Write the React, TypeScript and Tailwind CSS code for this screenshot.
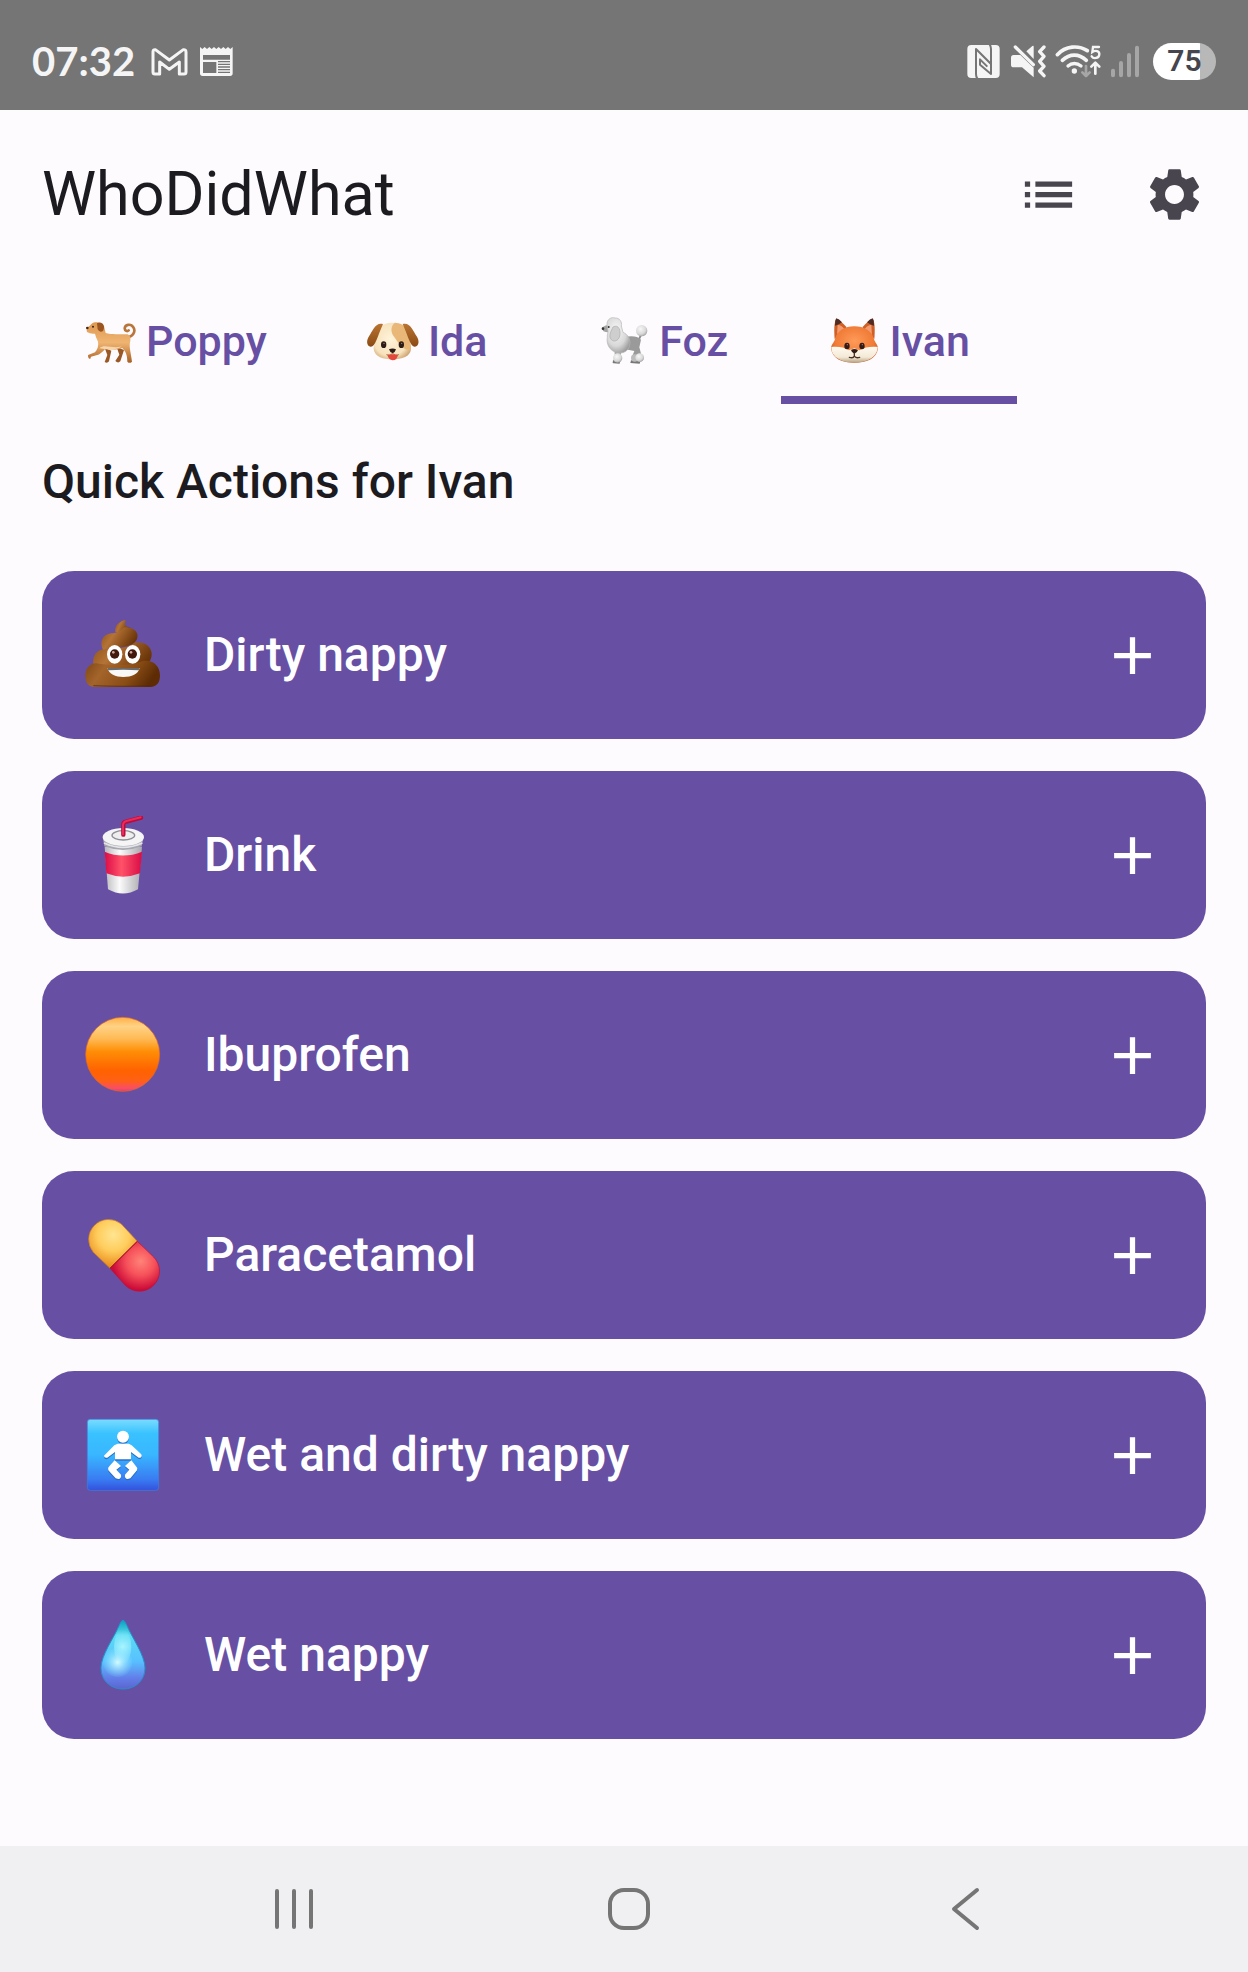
import { useState } from "react";
import type { ReactNode } from "react";
import { MdAdd, MdList, MdSettings } from "react-icons/md";

/* ---------- Status bar icons ---------- */

function MailIcon() {
  return (
    <svg viewBox="453 81 111 87" className="h-[29px] w-[37px]" fill="none" stroke="#f5f5f5" strokeWidth="9" strokeLinejoin="round" aria-hidden="true">
      <path d="M459 156 V96 Q459 88 466 89 L508 120 L550 89 Q558 88 558 96 V156 Q558 162 552 162 H538 V126 L508 148 L479 126 V162 H465 Q459 162 459 156Z" />
    </svg>
  );
}

function NewsIcon() {
  return (
    <svg viewBox="600 81 99 93" className="h-[31px] w-[33px]" aria-hidden="true">
      <path
        fill="#f5f5f5"
        fillRule="evenodd"
        d="M600 84 L607 90 L614 84 L621 90 L628 84 L635 90 L642 84 L649 90 L656 84 L663 90 L670 84 L677 90 L684 84 L691 90 L698 84 V163 Q698 171 690 171 H608 Q600 171 600 163Z M609 108 V122 H690 V108Z M609 129 V162 H649 V129Z M654 126 V130 H690 V126Z M654 134 V138 H690 V134Z M654 142 V146 H690 V142Z M654 150 V154 H690 V150Z M654 158 V162 H690 V158Z"
      />
    </svg>
  );
}

function NfcIcon() {
  return (
    <svg viewBox="78 72 99 105" className="h-[35px] w-[33px]" aria-hidden="true">
      <rect x="79" y="75" width="97" height="99" rx="12" fill="#f5f5f5" />
      <g fill="none" stroke="#757575" strokeWidth="6" strokeLinejoin="round">
        <path d="M109 176 Q105 170 105 162 V87 L150 132" />
        <path d="M146 73 Q150 79 150 87 V162 L105 117" opacity="0" />
        <path d="M146 73 Q150 79 150 87 V162 L117 134 V118 L139 140" />
      </g>
    </svg>
  );
}

function MuteIcon() {
  return (
    <svg viewBox="207 72 108 105" className="h-[35px] w-[36px]" aria-hidden="true">
      <path fill="#f5f5f5" d="M218 105 H238 L278 143 V172 L243 142 H218 Q210 142 210 134 V113 Q210 105 218 105Z" />
      <path fill="#f5f5f5" d="M256 94 L274 78 Q278 75 278 80 V117Z" />
      <path d="M223 81 L277 134" stroke="#f5f5f5" strokeWidth="10" strokeLinecap="round" />
      <path d="M309 81 L296 95 L309 109 L296 124 L309 139 L296 153 L309 167" fill="none" stroke="#f5f5f5" strokeWidth="10" strokeLinecap="round" strokeLinejoin="round" />
    </svg>
  );
}

function WifiIcon() {
  return (
    <svg viewBox="345 72 135 105" className="h-[35px] w-[45px] overflow-visible" fill="none" strokeLinecap="round" aria-hidden="true">
      <path d="M349 104 C374 77 412 75 439 92" stroke="#f5f5f5" strokeWidth="11" />
      <path d="M364 121 C386 100 414 100 436 121" stroke="#f5f5f5" strokeWidth="11" />
      <path d="M381 138 C392 128 408 128 420 138" stroke="#f5f5f5" strokeWidth="10" />
      <circle cx="400" cy="153" r="8" fill="#f5f5f5" />
      <path d="M435 138 V168 M424 157 L435 168 L446 157" stroke="#a6a6a6" strokeWidth="8" strokeLinejoin="round" />
      <path d="M463 161 V131 M451 140 L463 128 L475 140" stroke="#f5f5f5" strokeWidth="8" strokeLinejoin="round" />
      <path d="M474 81 H456 L454 96 C464 89 476 94 475 103 C474 116 457 117 452 109" stroke="#f5f5f5" strokeWidth="7" />
    </svg>
  );
}

function SignalIcon() {
  return (
    <svg viewBox="510 72 96 105" className="h-[35px] w-[32px]" fill="none" stroke="#a6a6a6" strokeWidth="12" strokeLinecap="round" aria-hidden="true">
      <path d="M516 152 V166 M540 129 V166 M564 105 V166 M588 83 V166" />
    </svg>
  );
}

/* ---------- Tab emoji ---------- */

function DogIcon() {
  return (
    <svg viewBox="72 45 156 156" className="size-[52px] shrink-0" aria-hidden="true">
      <defs>
        <linearGradient id="dogBody" x1="0" y1="0" x2="0" y2="1">
          <stop offset="0" stopColor="#dc9850" />
          <stop offset="0.5" stopColor="#f0b472" />
          <stop offset="1" stopColor="#a65f22" />
        </linearGradient>
      </defs>
      <path d="M199 112 C219 111 228 94 220 82 C212 69 195 74 194 85 C194 93 202 95 206 91" fill="none" stroke="#b8763a" strokeWidth="8" strokeLinecap="round" />
      <path d="M134 143 L142 165 L134 186 Q142 191 147 184 L154 152Z M170 141 L178 164 L166 183 Q174 191 181 184 L192 150Z" fill="#9a5826" />
      <path d="M79 84 Q90 78 95 71 C105 63 125 66 132 78 L137 99 C154 105 180 101 203 103 Q213 107 211 123 C206 140 212 152 216 185 Q209 192 202 185 C202 164 196 153 187 144 C169 151 149 149 136 146 C128 155 120 163 109 166 L93 170 L91 176 Q84 178 84 165 L105 157 C113 148 116 138 114 125 C110 116 107 109 105 101 Q91 103 81 96Z" fill="url(#dogBody)" />
      <path d="M111 70 C126 62 138 78 129 93 Q119 99 113 88Z" fill="#9c5520" />
      <path d="M118 145 C135 130 157 149 186 139 C170 151 147 150 134 147Z" fill="#ffe3bd" opacity="0.8" />
      <ellipse cx="82" cy="84" rx="4" ry="3.5" fill="#3c251b" />
      <circle cx="99" cy="80" r="3" fill="#3c251b" />
    </svg>
  );
}

function PuppyFaceIcon() {
  return (
    <svg viewBox="51 45 156 156" className="size-[52px] shrink-0 overflow-visible" aria-hidden="true">
      <defs>
        <radialGradient id="pupFace" cx="0.45" cy="0.45" r="0.65">
          <stop offset="0" stopColor="#fff4da" />
          <stop offset="0.7" stopColor="#f7e2bc" />
          <stop offset="1" stopColor="#c99d68" />
        </radialGradient>
        <linearGradient id="pupEar" x1="0" y1="0" x2="0" y2="1">
          <stop offset="0" stopColor="#b97432" />
          <stop offset="1" stopColor="#8c4a14" />
        </linearGradient>
      </defs>
      <path d="M131 68 C96 67 85 88 82 110 C80 127 74 135 74 147 C77 171 103 178 131 178 C159 178 184 170 186 147 C186 134 181 126 180 109 C176 84 162 68 131 68Z" fill="url(#pupFace)" />
      <path d="M138 68 C166 69 178 88 181 110 C182 127 187 136 186 149 C161 154 148 128 132 106 C124 91 127 75 138 68Z" fill="#e9b878" />
      <path d="M102 72 C80 66 72 90 60 109 C51 122 53 139 65 140 C79 141 84 112 102 72Z" fill="url(#pupEar)" />
      <path d="M161 72 C183 66 191 90 203 109 C212 122 210 139 198 140 C184 141 179 112 161 72Z" fill="url(#pupEar)" />
      <ellipse cx="104" cy="134" rx="8" ry="10" fill="#2d1c17" />
      <ellipse cx="157" cy="134" rx="8" ry="10" fill="#2d1c17" />
      <circle cx="105" cy="130" r="2" fill="#a98b7b" />
      <circle cx="158" cy="130" r="2" fill="#a98b7b" />
      <path d="M112 164 Q124 169 131 160 Q138 169 150 164" fill="none" stroke="#a57f5a" strokeWidth="3" />
      <path d="M120 148 Q131 143 141 148 Q138 158 131 160 Q123 158 120 148Z" fill="#2d1c17" />
      <path d="M115 165 Q131 160 147 165 Q144 181 131 181 Q119 180 115 165Z" fill="#e4473c" />
    </svg>
  );
}

function PoodleIcon() {
  return (
    <svg viewBox="51 45 156 156" className="size-[52px] shrink-0" aria-hidden="true">
      <defs>
        <radialGradient id="fluff" cx="0.4" cy="0.35" r="0.7">
          <stop offset="0" stopColor="#f7f7f7" />
          <stop offset="0.65" stopColor="#d8d8d8" />
          <stop offset="1" stopColor="#9d9d9d" />
        </radialGradient>
      </defs>
      <path d="M175 122 L185 101" stroke="#8d8d8d" strokeWidth="6" />
      <path d="M134 112 C153 106 174 109 183 119 L178 142 L185 169 L157 168 L163 153 L132 147Z" fill="#9a9a9a" />
      <path d="M103 148 L106 186 L98 190 H118 L125 151Z" fill="#a5a5a5" />
      <path d="M67 82 Q77 74 87 74 L101 91 Q87 101 69 93Z" fill="#a3a3a3" />
      <path d="M81 75 C80 57 94 50 105 54 C119 53 127 66 124 78 L129 97 C144 103 153 119 149 136 C145 155 126 163 109 157 C89 153 78 131 82 112 C80 105 86 97 83 89Z" fill="url(#fluff)" stroke="#b5b5b5" strokeWidth="2" />
      <path d="M99 81 C117 71 123 94 119 108 C116 124 97 129 91 114 C87 104 93 94 99 81Z" fill="#cecece" stroke="#aaa" strokeWidth="2" />
      <circle cx="185" cy="92" r="17" fill="url(#fluff)" />
      <path d="M98 189 L99 181 H120 L119 191Z M151 189 L153 181 H182 L179 191Z" fill="#777" />
      <circle cx="113" cy="174" r="14" fill="url(#fluff)" />
      <circle cx="164" cy="174" r="11" fill="#bcbcbc" />
      <circle cx="179" cy="173" r="13" fill="url(#fluff)" />
      <ellipse cx="69" cy="86" rx="4" ry="4" fill="#333" />
      <circle cx="86" cy="81" r="3" fill="#333" />
    </svg>
  );
}

function FoxIcon() {
  return (
    <svg viewBox="174 45 156 156" className="size-[52px] shrink-0" aria-hidden="true">
      <defs>
        <radialGradient id="foxFace" cx="0.5" cy="0.4" r="0.6">
          <stop offset="0" stopColor="#ff9a58" />
          <stop offset="0.7" stopColor="#ef7a35" />
          <stop offset="1" stopColor="#c95620" />
        </radialGradient>
        <linearGradient id="foxCheek" x1="0" y1="0" x2="0" y2="1">
          <stop offset="0" stopColor="#fffaf0" />
          <stop offset="0.65" stopColor="#f3e9d6" />
          <stop offset="1" stopColor="#b7a183" />
        </linearGradient>
      </defs>
      <path d="M194 117 C192 92 192 70 198 56 Q206 55 230 82Z" fill="#cf5f26" />
      <path d="M313 117 C315 92 315 70 309 56 Q301 55 277 82Z" fill="#cf5f26" />
      <path d="M195 77 Q194 62 199 55 Q207 57 216 67 L204 74Z M312 77 Q313 62 308 55 Q300 57 291 67 L303 74Z" fill="#4e2b24" />
      <path d="M201 105 L203 74 Q214 75 223 87Z M306 105 L304 74 Q293 75 284 87Z" fill="#f39b70" />
      <path d="M253 79 C224 79 201 93 195 117 C192 129 183 133 183 146 C188 177 218 188 253 188 C288 188 319 177 324 146 C324 133 315 129 312 117 C306 93 282 79 253 79Z" fill="url(#foxFace)" />
      <path d="M184 141 C205 139 223 142 237 151 L253 145 L269 151 C283 142 302 139 323 141 C323 172 289 188 253 188 C218 188 183 173 184 141Z" fill="url(#foxCheek)" />
      <ellipse cx="231" cy="138" rx="8" ry="10" fill="#321b16" />
      <ellipse cx="276" cy="138" rx="8" ry="10" fill="#321b16" />
      <circle cx="232" cy="134" r="2" fill="#ad7d69" />
      <circle cx="277" cy="134" r="2" fill="#ad7d69" />
      <path d="M243 150 Q253 144 264 150 Q262 158 253 161 Q245 158 243 150Z" fill="#321b16" />
      <path d="M238 172 Q250 176 253 168 Q257 176 269 172 M253 160 V169" fill="none" stroke="#4a3026" strokeWidth="4" strokeLinecap="round" />
    </svg>
  );
}

/* ---------- Action emoji ---------- */

function PoopIcon() {
  return (
    <svg viewBox="42 48 234 234" className="size-[78px] shrink-0" aria-hidden="true">
      <defs>
        <linearGradient id="poopBase" x1="0" y1="0" x2="1" y2="0.25">
          <stop offset="0" stopColor="#7d4512" />
          <stop offset="0.3" stopColor="#a4652b" />
          <stop offset="0.7" stopColor="#8a4d15" />
          <stop offset="1" stopColor="#5d2c05" />
        </linearGradient>
        <linearGradient id="poopTop" x1="0" y1="0" x2="1" y2="0.4">
          <stop offset="0" stopColor="#8b5018" />
          <stop offset="0.4" stopColor="#b57336" />
          <stop offset="1" stopColor="#6a3508" />
        </linearGradient>
      </defs>
      <path d="M136 96 C133 77 147 66 164 60 Q170 62 165 70 C165 79 172 82 181 83 L170 100Z" fill="url(#poopTop)" />
      <path d="M70 195 C67 164 81 151 102 147 C135 147 175 145 191 128 C220 122 243 137 245 160 Q246 177 236 188 L160 215Z" fill="url(#poopTop)" />
      <path d="M96 143 C90 120 101 104 122 100 C142 98 153 94 160 83 C179 78 198 88 202 102 Q205 117 193 128 C170 146 125 141 100 149Z" fill="url(#poopTop)" />
      <path d="M79 190 C120 199 187 197 218 183 C251 177 270 200 270 226 C270 250 259 261 240 261 H76 C56 261 46 250 46 228 C46 206 57 191 79 190Z" fill="url(#poopBase)" />
      <path d="M70 257 Q160 261 248 257" fill="none" stroke="#592a08" strokeWidth="4" opacity="0.6" />
      <ellipse cx="134" cy="163" rx="23" ry="28" fill="#fff" />
      <ellipse cx="188" cy="163" rx="23" ry="28" fill="#fff" />
      <circle cx="134" cy="162" r="14" fill="#42190c" />
      <circle cx="187" cy="162" r="14" fill="#42190c" />
      <circle cx="130" cy="157" r="4" fill="#c8a89b" />
      <circle cx="183" cy="157" r="4" fill="#c8a89b" />
      <path d="M112 204 H209 C205 222 185 231 160 231 C136 231 117 222 112 204Z" fill="#f8f8f8" />
      <path d="M112 204 H209 L206 211 Q160 207 115 211Z" fill="#6b6b6b" />
    </svg>
  );
}

function CupIcon() {
  return (
    <svg viewBox="42 648 234 234" className="size-[78px] shrink-0" aria-hidden="true">
      <defs>
        <linearGradient id="cupWhite" x1="0" y1="0" x2="1" y2="0">
          <stop offset="0" stopColor="#b9b9bd" />
          <stop offset="0.4" stopColor="#fbfbfb" />
          <stop offset="1" stopColor="#a9a9ae" />
        </linearGradient>
        <linearGradient id="cupRed" x1="0" y1="0" x2="1" y2="0">
          <stop offset="0" stopColor="#dc0c48" />
          <stop offset="0.45" stopColor="#ff5268" />
          <stop offset="1" stopColor="#d90c46" />
        </linearGradient>
      </defs>
      <path d="M104 740 L114 868 Q159 893 204 868 L216 740Z" fill="url(#cupWhite)" />
      <path d="M104 755 Q159 778 216 755 L210 820 Q159 840 109 820Z" fill="url(#cupRed)" />
      <path d="M98 711 L103 739 Q159 761 215 739 L221 711Z" fill="#a7a7b0" />
      <path d="M102 729 Q159 755 217 729" fill="none" stroke="#e4e4e8" strokeWidth="5" />
      <ellipse cx="160" cy="711" rx="62" ry="27" fill="#f5f5f6" />
      <ellipse cx="160" cy="706" rx="34" ry="14" fill="#eee" stroke="#8e8e96" strokeWidth="4" />
      <path d="M160 704 V673 Q160 666 169 665 L213 653" fill="none" stroke="#b80c3d" strokeWidth="13" strokeLinecap="round" strokeLinejoin="round" />
      <path d="M159 703 V674 Q160 666 169 663 L212 652" fill="none" stroke="#ed2a59" strokeWidth="6" strokeLinecap="round" />
    </svg>
  );
}

function OrangeCircleIcon() {
  return (
    <svg viewBox="42 48 234 234" className="size-[78px] shrink-0" aria-hidden="true">
      <defs>
        <linearGradient id="orangeFill" x1="0" y1="0" x2="0" y2="1">
          <stop offset="0" stopColor="#ffb045" />
          <stop offset="0.12" stopColor="#ffd285" />
          <stop offset="0.3" stopColor="#ffb851" />
          <stop offset="0.46" stopColor="#ff8e06" />
          <stop offset="0.72" stopColor="#ff6200" />
          <stop offset="0.86" stopColor="#ff6014" />
          <stop offset="0.96" stopColor="#f94c6b" />
          <stop offset="1" stopColor="#e63f54" />
        </linearGradient>
      </defs>
      <circle cx="158" cy="163" r="111" fill="url(#orangeFill)" stroke="#e36a22" strokeWidth="2" />
    </svg>
  );
}

function PillIcon() {
  return (
    <svg viewBox="42 648 234 234" className="size-[78px] shrink-0" aria-hidden="true">
      <defs>
        <radialGradient id="pillYellow" gradientUnits="userSpaceOnUse" cx="130" cy="705" r="95">
          <stop offset="0" stopColor="#ffe591" />
          <stop offset="0.5" stopColor="#ffcd5d" />
          <stop offset="1" stopColor="#e98d1d" />
        </radialGradient>
        <radialGradient id="pillRed" gradientUnits="userSpaceOnUse" cx="212" cy="784" r="85">
          <stop offset="0" stopColor="#ff8378" />
          <stop offset="0.5" stopColor="#f6515a" />
          <stop offset="1" stopColor="#cb0b38" />
        </radialGradient>
      </defs>
      <path d="M120 805 L70 757 A60 60 0 0 1 154 672 L202 724Z" fill="url(#pillYellow)" stroke="#ca7a20" strokeWidth="2" />
      <path d="M202 724 L251 771 A60 60 0 0 1 166 856 L120 805Z" fill="url(#pillRed)" stroke="#b91038" strokeWidth="2" />
      <path d="M120 805 L202 724" stroke="#a71525" strokeWidth="3" />
    </svg>
  );
}

function BabyIcon() {
  return (
    <svg viewBox="42 48 234 234" className="size-[78px] shrink-0" aria-hidden="true">
      <defs>
        <linearGradient id="babyBg" x1="0" y1="0" x2="0" y2="1">
          <stop offset="0" stopColor="#7adcff" />
          <stop offset="0.2" stopColor="#39c2ff" />
          <stop offset="0.5" stopColor="#39b6ff" />
          <stop offset="0.85" stopColor="#397bf2" />
          <stop offset="1" stopColor="#3451dc" />
        </linearGradient>
      </defs>
      <rect x="52" y="58" width="214" height="213" rx="9" fill="url(#babyBg)" stroke="#3a83dc" strokeWidth="2" />
      {[
        { dy: 4, color: "#2b6fc5" },
        { dy: 0, color: "#ffffff" },
      ].map((layer) => (
        <g key={layer.color} fill={layer.color} transform={`translate(0 ${layer.dy})`}>
          <circle cx="159" cy="110" r="18" />
          <path d="M143 131 H176 L185 136 L213 162 Q218 169 211 173 L206 173 L183 156 V178 H135 V156 L112 173 Q102 175 102 167 L133 136Z" />
          <path d="M134 181 L153 198 L139 209 L153 224 Q155 236 145 237 L137 235 L115 211 Q112 203 118 199Z" />
          <path d="M184 181 L165 198 L178 209 L165 224 Q163 236 173 237 L181 235 L201 211 Q204 203 198 199Z" />
        </g>
      ))}
    </svg>
  );
}

function DropIcon() {
  return (
    <svg viewBox="42 648 234 234" className="size-[78px] shrink-0" aria-hidden="true">
      <defs>
        <linearGradient id="dropFill" x1="0" y1="0" x2="0" y2="1">
          <stop offset="0" stopColor="#07a1bd" />
          <stop offset="0.22" stopColor="#5bdcf2" />
          <stop offset="0.6" stopColor="#58bfff" />
          <stop offset="0.85" stopColor="#627ce8" />
          <stop offset="1" stopColor="#5b66ce" />
        </linearGradient>
        <radialGradient id="dropShine" gradientUnits="userSpaceOnUse" cx="143" cy="787" r="48">
          <stop offset="0" stopColor="#d4faff" />
          <stop offset="1" stopColor="#8beaff" stopOpacity="0" />
        </radialGradient>
        <radialGradient id="dropGlow" gradientUnits="userSpaceOnUse" cx="158" cy="740" r="52">
          <stop offset="0" stopColor="#a9f5ff" />
          <stop offset="1" stopColor="#9cf1ff" stopOpacity="0" />
        </radialGradient>
      </defs>
      <path d="M159 661 C163 661 166 667 171 677 C186 713 225 766 225 804 C225 842 196 867 159 867 C122 867 93 842 93 804 C93 766 132 713 147 677 C152 667 155 661 159 661Z" fill="url(#dropFill)" stroke="#268fcb" strokeWidth="3" />
      <ellipse cx="158" cy="740" rx="26" ry="52" fill="url(#dropGlow)" />
      <circle cx="143" cy="787" r="44" fill="url(#dropShine)" />
    </svg>
  );
}

/* ---------- Data ---------- */

const people: { name: string; icon: ReactNode }[] = [
  { name: "Poppy", icon: <DogIcon /> },
  { name: "Ida", icon: <PuppyFaceIcon /> },
  { name: "Foz", icon: <PoodleIcon /> },
  { name: "Ivan", icon: <FoxIcon /> },
];

const actions: { label: string; icon: ReactNode }[] = [
  { label: "Dirty nappy", icon: <PoopIcon /> },
  { label: "Drink", icon: <CupIcon /> },
  { label: "Ibuprofen", icon: <OrangeCircleIcon /> },
  { label: "Paracetamol", icon: <PillIcon /> },
  { label: "Wet and dirty nappy", icon: <BabyIcon /> },
  { label: "Wet nappy", icon: <DropIcon /> },
];

/* ---------- Sections ---------- */

function StatusBar() {
  return (
    <div className="flex h-[110px] items-center justify-between bg-[#757575] px-8 pt-3 text-[#f5f5f5]">
      <div className="flex items-center gap-3">
        <span className="mr-1 font-[Lato,sans-serif] text-[40px] leading-none font-bold">07:32</span>
        <MailIcon />
        <NewsIcon />
      </div>
      <div className="flex items-center gap-[10px]">
        <NfcIcon />
        <MuteIcon />
        <WifiIcon />
        <SignalIcon />
        <div className="flex h-[37px] w-[63px] items-center justify-center rounded-full bg-linear-to-r from-white from-75% to-[#b8b8b8] to-75% font-[Roboto,sans-serif] text-[30px] leading-none font-semibold text-[#45454d]">
          75
        </div>
      </div>
    </div>
  );
}

function TopBar() {
  return (
    <header className="flex h-[168px] items-center justify-between px-[42px]">
      <h1 className="text-[61px] leading-none">WhoDidWhat</h1>
      <div className="flex gap-[63px] text-[#49454f]">
        <button type="button" aria-label="Activity log">
          <MdList className="size-[63px]" />
        </button>
        <button type="button" aria-label="Settings">
          <MdSettings className="size-[63px]" />
        </button>
      </div>
    </header>
  );
}

function NavigationBar() {
  return (
    <nav className="grid h-[126px] grid-cols-3 items-center justify-items-center bg-[#f0f0f2] pr-[115px] pl-[126px]">
      <button type="button" aria-label="Recent apps">
        <svg viewBox="0 0 44 44" className="size-11" stroke="#757575" strokeWidth="4" strokeLinecap="round" aria-hidden="true">
          <path d="M5 4 V40 M22 4 V40 M39 4 V40" />
        </svg>
      </button>
      <button type="button" aria-label="Home">
        <svg viewBox="0 0 44 44" className="size-11" fill="none" stroke="#757575" strokeWidth="4" aria-hidden="true">
          <rect x="3" y="3" width="38" height="38" rx="14" />
        </svg>
      </button>
      <button type="button" aria-label="Back">
        <svg viewBox="0 0 44 44" className="size-11" fill="none" stroke="#757575" strokeWidth="4" strokeLinecap="round" strokeLinejoin="round" aria-hidden="true">
          <path d="M34 3 L11 22 L34 41" />
        </svg>
      </button>
    </nav>
  );
}

export default function App() {
  const [selected, setSelected] = useState("Ivan");

  return (
    <div className="flex min-h-screen flex-col bg-[#fefbff] font-[Roboto,sans-serif] text-[#1c1b1f]">
      <StatusBar />
      <TopBar />
      <div role="tablist" aria-label="People" className="flex px-[42px]">
        {people.map((person) => (
          <button
            key={person.name}
            type="button"
            role="tab"
            aria-selected={person.name === selected}
            onClick={() => setSelected(person.name)}
            className={`flex h-[126px] min-w-[236px] items-center justify-center gap-[10px] border-y-8 border-t-transparent px-[42px] text-[43px] leading-none font-medium text-[#6750a4] ${
              person.name === selected ? "border-b-[#6750a4]" : "border-b-transparent"
            }`}
          >
            {person.icon}
            {person.name}
          </button>
        ))}
      </div>
      <main className="flex flex-1 flex-col px-[42px] pt-[42px]">
        <h2 className="text-[48px] leading-[72px] font-medium">Quick Actions for {selected}</h2>
        <ul className="mt-[53px] flex flex-col gap-8">
          {actions.map((action) => (
            <li key={action.label}>
              <button type="button" className="flex h-[168px] w-full items-center gap-[42px] rounded-[32px] bg-[#6750a4] px-[42px] text-left text-white">
                {action.icon}
                <span className="flex-1 text-[48px] leading-none font-medium">{action.label}</span>
                <MdAdd className="size-[63px]" aria-hidden="true" />
              </button>
            </li>
          ))}
        </ul>
      </main>
      <NavigationBar />
    </div>
  );
}
